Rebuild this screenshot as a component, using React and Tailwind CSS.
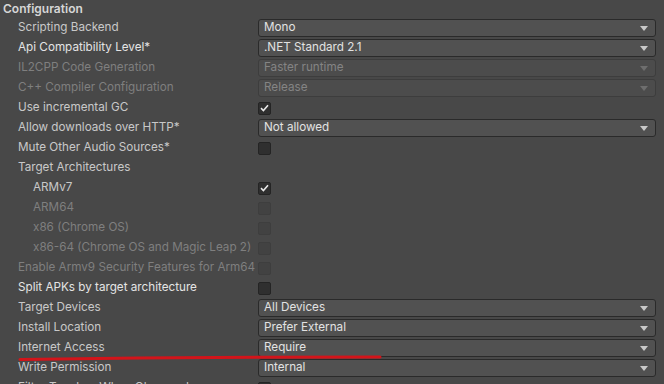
import React from 'react';

const rows = [
  { label: 'Scripting Backend', type: 'select', value: 'Mono' },
  { label: 'Api Compatibility Level*', type: 'select', value: '.NET Standard 2.1', bright: true },
  { label: 'IL2CPP Code Generation', type: 'select', value: 'Faster runtime', disabled: true },
  { label: 'C++ Compiler Configuration', type: 'select', value: 'Release', disabled: true },
  { label: 'Use incremental GC', type: 'check', checked: true },
  { label: 'Allow downloads over HTTP*', type: 'select', value: 'Not allowed' },
  { label: 'Mute Other Audio Sources*', type: 'check' },
  { label: 'Target Architectures', type: 'none' },
  { label: 'ARMv7', type: 'check', checked: true, indent: true },
  { label: 'ARM64', type: 'check', indent: true, disabled: true },
  { label: 'x86 (Chrome OS)', type: 'check', indent: true, disabled: true },
  { label: 'x86-64 (Chrome OS and Magic Leap 2)', type: 'check', indent: true, disabled: true },
  { label: 'Enable Armv9 Security Features for Arm64', type: 'check', disabled: true },
  { label: 'Split APKs by target architecture', type: 'check', bright: true },
  { label: 'Target Devices', type: 'select', value: 'All Devices' },
  { label: 'Install Location', type: 'select', value: 'Prefer External' },
  { label: 'Internet Access', type: 'select', value: 'Require' },
  { label: 'Write Permission', type: 'select', value: 'Internal' },
  { label: 'Filter Touches When Obscured', type: 'check' },
];

const Select = ({ value, disabled }) => (
  <div
    className={`flex h-[18px] w-[398px] items-center justify-between rounded-[3px] border px-[5px] ${
      disabled ? 'border-[#3d3d3d] bg-[#4c4c4c] text-[#848484]' : 'border-[#2a2a2a] bg-[#515151] text-[#e2e2e2]'
    }`}
  >
    <span className="leading-none">{value}</span>
    <svg width="8" height="5" viewBox="0 0 8 5" className="mr-[2px]">
      <path d="M0 0H8L4 5Z" fill={disabled ? '#6e6e6e' : '#c8c8c8'} />
    </svg>
  </div>
);

const Check = ({ checked, disabled }) => (
  <div
    className={`flex h-[13px] w-[13px] items-center justify-center rounded-[2px] border ${
      disabled ? 'border-[#3e3e3e] bg-[#424242]' : 'border-[#242424] bg-[#2f2f2f]'
    }`}
  >
    {checked && (
      <svg width="9" height="8" viewBox="0 0 9 8">
        <path d="M1 4.2L3.4 6.5L8 1.2" stroke="#e8e8e8" strokeWidth="1.6" fill="none" />
      </svg>
    )}
  </div>
);

export default function App() {
  return (
    <div
      className="relative h-[384px] w-[664px] overflow-hidden bg-[#484848] text-[11.7px]"
      style={{ fontFamily: 'Inter, "Noto Sans", sans-serif' }}
    >
      <div className="flex h-[18px] items-center pl-[3px] text-[12px] font-semibold text-[#d6d6d6]">Configuration</div>
      {rows.map((r) => (
        <div key={r.label} className="flex h-[20px] items-center">
          <div
            className={`w-[258px] shrink-0 whitespace-nowrap ${r.indent ? 'pl-[33px]' : 'pl-[18px]'} ${
              r.disabled ? 'text-[#7f7f7f]' : r.bright ? 'text-[#e4e4e4]' : 'text-[#c8c8c8]'
            }`}
          >
            {r.label}
          </div>
          {r.type === 'select' && <Select value={r.value} disabled={r.disabled} />}
          {r.type === 'check' && <Check checked={r.checked} disabled={r.disabled} />}
        </div>
      ))}
      <svg className="absolute left-0 top-0" width="664" height="384">
        <path d="M20 359.5 Q200 357 380 357" stroke="#d3141a" strokeWidth="3" fill="none" strokeLinecap="round" />
      </svg>
    </div>
  );
}
